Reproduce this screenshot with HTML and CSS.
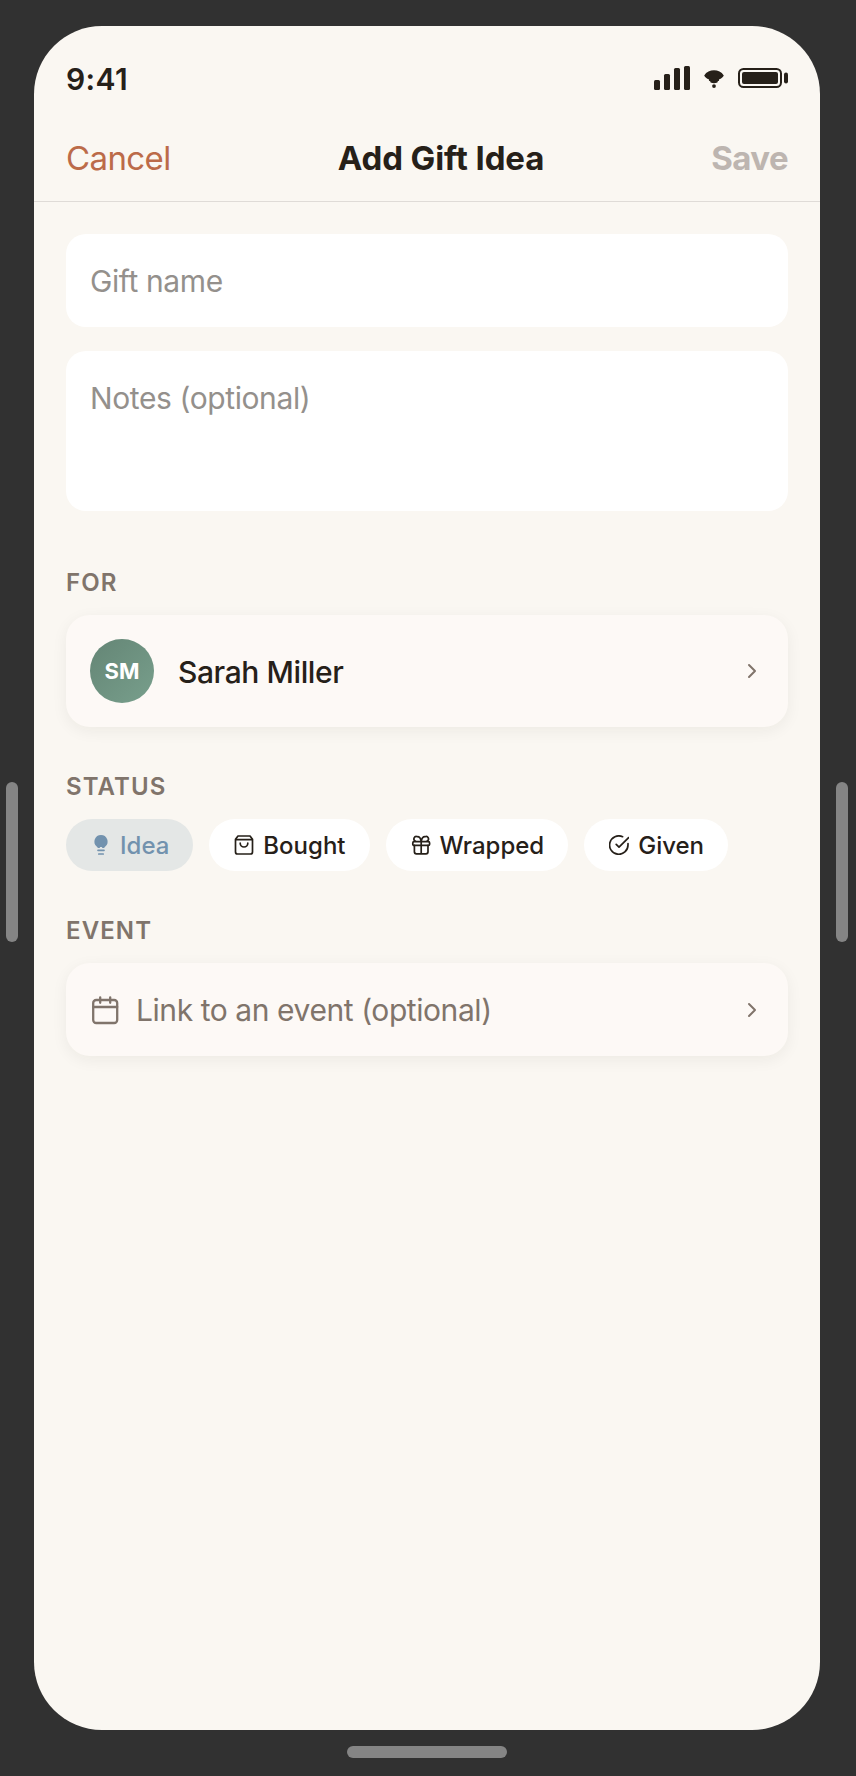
FILE: index.html
```html
<!DOCTYPE html>
<html lang="en">
<head>
    <meta charset="UTF-8">
    <meta name="viewport" content="width=device-width, initial-scale=1.0">
    <title>Add Gift Idea</title>
    <link rel="stylesheet" href="styles.css">
</head>
<body>
    <span class="handle handle-left"></span>
    <main class="phone">
        <div class="status-bar">
            <span class="time">9:41</span>
            <div class="status-icons">
                <svg class="signal" width="36" height="24" viewBox="0 0 36 24" fill="currentColor">
                    <rect x="0" y="14" width="6" height="10" rx="1.5"/>
                    <rect x="10" y="8" width="6" height="16" rx="1.5"/>
                    <rect x="20" y="2" width="6" height="22" rx="1.5"/>
                    <rect x="30" y="0" width="6" height="24" rx="1.5"/>
                </svg>
                <svg class="wifi" width="20" height="18" viewBox="0 0 20 18" fill="currentColor">
                    <path d="M.2 5.4C4.6-1.4 15.4-1.4 19.8 5.4 18.9 7.2 17.4 8.6 15.2 9.2L15 10.8 13.8 11.2 13.4 12.6Q10 14 6.6 12.6L6.2 11.2 5 10.8 4.8 9.2C2.6 8.6 1.1 7.2 .2 5.4Z"/>
                    <circle cx="10" cy="16.1" r="1.9"/>
                </svg>
                <svg class="battery" width="50" height="20" viewBox="0 0 50 20" fill="currentColor">
                    <rect x="1" y="1" width="42" height="18" rx="4.5" fill="none" stroke="currentColor" stroke-width="2"/>
                    <rect x="4" y="4" width="36" height="12" rx="2"/>
                    <rect x="46" y="4.5" width="4" height="11" rx="2"/>
                </svg>
            </div>
        </div>

        <header class="nav">
            <a class="cancel">Cancel</a>
            <h1 class="title">Add Gift Idea</h1>
            <a class="save">Save</a>
        </header>

        <form class="form">
            <input class="field" type="text" placeholder="Gift name">
            <textarea class="field notes" placeholder="Notes (optional)"></textarea>

            <h2 class="label">FOR</h2>
            <div class="card person">
                <span class="avatar">SM</span>
                <span class="name">Sarah Miller</span>
                <svg class="chevron" width="10" height="16" viewBox="0 0 10 16"><path d="M2 2l6 6-6 6"/></svg>
            </div>

            <h2 class="label">STATUS</h2>
            <div class="chips">
                <div class="chip selected">
                    <svg class="chip-icon bulb" width="20" height="20" viewBox="0 0 20 20">
                        <path class="solid" d="M10 0a6.6 6.6 0 0 0-4.3 11.6c.7.6 1 1 1.1 1.4h1.8l.6-.9h1.6l.6.9h1.8c.1-.4.4-.8 1.1-1.4A6.6 6.6 0 0 0 10 0z"/>
                        <path d="M7 15.3h6M7.8 19h4.4"/>
                    </svg>
                    <span class="chip-text">Idea</span>
                </div>
                <div class="chip">
                    <svg class="chip-icon" width="20" height="20" viewBox="0 0 20 20">
                        <path d="M1.5 4.2L4 1h12l2.5 3.2V17a2 2 0 0 1-2 2h-13a2 2 0 0 1-2-2zM1.5 4.7h17M6.2 8.2a3.8 3.8 0 0 0 7.6 0"/>
                    </svg>
                    <span class="chip-text">Bought</span>
                </div>
                <div class="chip">
                    <svg class="chip-icon" width="20" height="20" viewBox="0 0 20 20">
                        <rect x="1.8" y="6.7" width="16.8" height="3.7" rx="1.2"/>
                        <path d="M3.4 10.4v6.4a2 2 0 0 0 2 2h9.6a2 2 0 0 0 2-2v-6.4M10.2 6.7v12M10.2 6.7C9.8 3.6 8.3 1.7 6.4 1.7a2.4 2.4 0 0 0-2 4.5M10.2 6.7c.4-3.1 1.9-5 3.8-5a2.4 2.4 0 0 1 2 4.5"/>
                    </svg>
                    <span class="chip-text">Wrapped</span>
                </div>
                <div class="chip">
                    <svg class="chip-icon" width="20" height="20" viewBox="0 0 20 20">
                        <path d="M19 8.6v1.4a9.2 9.2 0 1 1-5.4-8.3M19.6 2.6L10 12.1 7.2 9.3"/>
                    </svg>
                    <span class="chip-text">Given</span>
                </div>
            </div>

            <h2 class="label">EVENT</h2>
            <div class="card event">
                <svg class="calendar" width="30" height="30" viewBox="0 0 30 30">
                    <rect x="3.2" y="5" width="24" height="23" rx="3"/>
                    <path d="M3.2 12h24M10.2 2.3v5.5M20.2 2.3v5.5"/>
                </svg>
                <span class="link">Link to an event (optional)</span>
                <svg class="chevron" width="10" height="16" viewBox="0 0 10 16"><path d="M2 2l6 6-6 6"/></svg>
            </div>
        </form>
    </main>
    <span class="handle handle-right"></span>
    <span class="handle handle-bottom"></span>
</body>
</html>
```
FILE: styles.css
```css
* {
    box-sizing: border-box;
}

body {
    margin: 0;
    height: 1776px;
    background-color: #313131;
    color: #262019;
    font-family: Inter, "Liberation Sans", sans-serif;
    display: grid;
    grid-template-columns: 34px 786px 36px;
    grid-template-rows: 26px 1704px 46px;
}

.phone {
    grid-area: 2 / 2;
    background-color: #faf7f2;
    border-radius: 68px;
    overflow: hidden;
}

.handle {
    background-color: #858585;
    border-radius: 6px;
    width: 12px;
    height: 160px;
}

.handle-left {
    grid-area: 2 / 1;
    margin: 756px 0 0 6px;
}

.handle-right {
    grid-area: 2 / 3;
    margin: 756px 0 0 16px;
}

.handle-bottom {
    grid-area: 3 / 2;
    width: 160px;
    height: 12px;
    margin: 16px 0 0 313px;
}

.status-bar {
    height: 84px;
    padding: 19px 32px 0;
    display: flex;
    justify-content: space-between;
    align-items: center;
}

.time {
    padding-top: 3px;
    font-size: 30px;
    font-weight: 600;
    letter-spacing: 0.4px;
}

.status-icons {
    display: flex;
    align-items: center;
}

.wifi {
    margin: 2px 14px 0;
}

.nav {
    height: 92px;
    padding: 5px 32px 0;
    display: flex;
    justify-content: space-between;
    align-items: center;
    border-bottom: 1px solid #dfdbd7;
    font-size: 33px;
}

.cancel {
    color: #bc6b49;
    letter-spacing: -0.6px;
}

.title {
    margin: 0;
    font-size: 33px;
    font-weight: 650;
    letter-spacing: -0.1px;
}

.save {
    color: #bdb5b0;
    font-weight: 650;
    letter-spacing: -0.6px;
}

.form {
    padding: 32px;
    display: flex;
    flex-direction: column;
}

.field {
    height: 93px;
    padding: 0 24px;
    border: none;
    border-radius: 20px;
    outline: none;
    background-color: #fff;
    font-family: inherit;
    font-size: 30px;
    letter-spacing: -0.4px;
    resize: none;
}

.field::placeholder {
    color: #94908c;
    opacity: 1;
}

.notes {
    height: 160px;
    margin-top: 24px;
    padding-top: 28px;
    line-height: 38px;
}

.label {
    margin: 56px 0 16px;
    height: 32px;
    line-height: 32px;
    font-size: 24px;
    font-weight: 600;
    letter-spacing: 1.1px;
    color: #80746b;
}

.card {
    padding: 0 31px 0 24px;
    display: flex;
    align-items: center;
    background-color: #fdf9f6;
    border-radius: 24px;
    box-shadow: 0 4px 16px rgba(38, 32, 25, 0.06);
}

.person {
    height: 112px;
}

.card + .label,
.chips + .label {
    margin-top: 44px;
}

.avatar {
    width: 64px;
    height: 64px;
    display: flex;
    justify-content: center;
    align-items: center;
    border-radius: 50%;
    background: linear-gradient(135deg, #648575, #789f8c);
    color: #fff;
    font-size: 22px;
    font-weight: 650;
}

.name {
    margin-left: 24px;
    padding-top: 2px;
    font-size: 30px;
    font-weight: 500;
    letter-spacing: -0.4px;
}

svg {
    display: block;
}

.chevron,
.calendar,
.chip-icon {
    fill: none;
    stroke: currentColor;
    stroke-width: 1.7;
    stroke-linecap: round;
    stroke-linejoin: round;
}

.chevron {
    margin-left: auto;
    color: #80746b;
    stroke-width: 2;
}

.chips {
    display: flex;
    gap: 16px;
}

.chip {
    height: 52px;
    padding: 0 24px 0 25px;
    display: flex;
    align-items: center;
    gap: 9px;
    background-color: #fff;
    border-radius: 26px;
    font-size: 24px;
    font-weight: 500;
}

.selected {
    background-color: #e4e7e6;
    color: #7292ae;
}

.bulb .solid {
    fill: currentColor;
    stroke: none;
}

.event {
    height: 93px;
    color: #80746b;
}

.calendar {
    stroke-width: 2.3;
}

.link {
    margin-left: 16px;
    font-size: 30px;
    letter-spacing: -0.43px;
}
```
